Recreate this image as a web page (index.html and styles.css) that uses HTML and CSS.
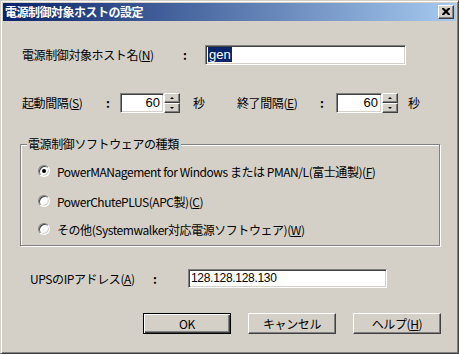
FILE: index.html
```html
<!DOCTYPE html>
<html lang="ja">
<head>
<meta charset="utf-8">
<title>電源制御対象ホストの設定</title>
<link rel="stylesheet" href="styles.css">
</head>
<body>
<div class="window">
  <div class="titlebar">
    <span class="title">電源制御対象ホストの設定</span>
    <span class="close"><svg width="8" height="7" viewBox="0 0 8 7"><path d="M0 0h2l2 2 2-2h2v1l-2.5 2.5L8 6v1H6L4 5 2 7H0V6l2.5-2.5L0 1z" fill="#000"/></svg></span>
  </div>
  <div class="body">
    <div class="row row1">
      <span class="lbl w-host">電源制御対象ホスト名(<u>N</u>)</span>
      <span class="colon c-host">:</span>
      <div class="edit e-host"><span class="sel">gen</span></div>
    </div>
    <div class="row row2">
      <span class="lbl w-start">起動間隔(<u>S</u>)</span>
      <span class="colon c-start">:</span>
      <div class="edit num e-start">60</div>
      <div class="spin"><span class="sb up"><i></i></span><span class="sb down"><i></i></span></div>
      <span class="unit u1">秒</span>
      <span class="lbl w-end">終了間隔(<u>E</u>)</span>
      <span class="colon c-end">:</span>
      <div class="edit num e-end">60</div>
      <div class="spin"><span class="sb up"><i></i></span><span class="sb down"><i></i></span></div>
      <span class="unit u2">秒</span>
    </div>
    <div class="group">
      <span class="caption">電源制御ソフトウェアの種類</span>
      <div class="radio r1"><span class="dot on"></span><span>PowerMANagement for Windows または PMAN/L(富士通製)(<u>F</u>)</span></div>
      <div class="radio r2"><span class="dot"></span><span>PowerChutePLUS(APC製)(<u>C</u>)</span></div>
      <div class="radio r3"><span class="dot"></span><span>その他(Systemwalker対応電源ソフトウェア)(<u>W</u>)</span></div>
    </div>
    <div class="row row3">
      <span class="lbl w-ups">UPSのIPアドレス(<u>A</u>)</span>
      <span class="colon c-ups">:</span>
      <div class="edit e-ups">128.128.128.130</div>
    </div>
    <div class="buttons">
      <div class="btn default"><span class="face">OK</span></div>
      <div class="btn"><span class="face">キャンセル</span></div>
      <div class="btn"><span class="face">ヘルプ(<u>H</u>)</span></div>
    </div>
  </div>
</div>
</body>
</html>
```
FILE: styles.css
```css
html, body {
  margin: 0;
  padding: 0;
  background: #d4d0c8;
}
body {
  font-family: "Noto Sans CJK JP", "Liberation Sans", sans-serif;
  font-size: 12px;
  color: #000;
  letter-spacing: -0.4px;
}
.window {
  width: 459px;
  height: 354px;
  box-sizing: border-box;
  background: #d4d0c8;
  border-style: solid;
  border-width: 1px;
  border-color: #d4d0c8 #404040 #404040 #d4d0c8;
  box-shadow: inset 1px 1px 0 #fff, inset -1px -1px 0 #808080;
  padding: 2px;
  display: flex;
  flex-direction: column;
}
.titlebar {
  height: 18px;
  flex: none;
  background: linear-gradient(to right, #0a246a, #a6caf0);
  display: flex;
  align-items: center;
  justify-content: space-between;
  padding: 0 2px 0 2px;
}
.title {
  color: #fff;
  font-weight: bold;
  font-size: 12px;
  line-height: 18px;
  letter-spacing: -0.5px;
}
.close {
  width: 16px;
  height: 14px;
  box-sizing: border-box;
  background: #d4d0c8;
  border-style: solid;
  border-width: 1px;
  border-color: #fff #404040 #404040 #fff;
  box-shadow: inset -1px -1px 0 #808080;
  display: flex;
  align-items: center;
  justify-content: center;
}
.close svg { display: block; margin-left: -1px; margin-top: -1px; }
.body {
  flex: 1;
  display: flex;
  flex-direction: column;
}
.row {
  display: flex;
  align-items: center;
  white-space: nowrap;
}
.row1 { margin-top: 24px; margin-left: 19px; height: 20px; }
.row2 { margin-top: 28px; margin-left: 19px; height: 20px; }
.row3 { margin-top: 23px; margin-left: 27px; height: 19px; }
.lbl, .colon, .unit { flex: none; line-height: 16px; }
.w-host { width: 161px; }
.c-host { width: 22px; }
.w-start { width: 84px; }
.c-start { width: 14px; }
.w-end { width: 83px; }
.c-end { width: 16px; }
.w-ups { width: 123px; }
.c-ups { width: 35px; }
.unit.u1 { margin-left: 13px; width: 44px; }
.unit.u2 { margin-left: 10px; }
.colon { font-weight: bold; }
.edit {
  flex: none;
  box-sizing: border-box;
  height: 20px;
  background: #fff;
  border-style: solid;
  border-width: 1px;
  border-color: #808080 #fff #fff #808080;
  box-shadow: inset 1px 1px 0 #404040, inset -1px -1px 0 #d4d0c8;
  padding: 0 3px 0 2px;
  line-height: 17px;
  font-family: "Liberation Sans", "Noto Sans CJK JP", sans-serif;
  font-size: 12px;
  letter-spacing: 0;
  overflow: hidden;
}
.e-host { width: 201px; }
.e-start { width: 44px; }
.e-end { width: 46px; }
.e-ups { width: 199px; height: 19px; line-height: 16px; letter-spacing: -0.3px; }
.num { text-align: right; font-size: 13px; }
.sel {
  background: #0a246a;
  color: #fff;
  padding: 0 1px;
  font-size: 13px;
}
.spin {
  flex: none;
  width: 16px;
  height: 20px;
  display: flex;
  flex-direction: column;
}
.sb {
  height: 10px;
  box-sizing: border-box;
  background: #d4d0c8;
  border-style: solid;
  border-width: 1px;
  border-color: #fff #404040 #404040 #fff;
  box-shadow: inset -1px -1px 0 #808080;
  display: flex;
  align-items: center;
  justify-content: center;
}
.sb i {
  width: 0;
  height: 0;
  border-left: 2px solid transparent;
  border-right: 2px solid transparent;
  margin-right: 1px;
}
.up i { border-bottom: 2px solid #000; }
.down i { border-top: 2px solid #000; }
.group {
  position: relative;
  margin: 31px 0 0 17px;
  width: 420px;
  height: 102px;
  box-sizing: border-box;
  border: 1px solid #808080;
  box-shadow: inset 1px 1px 0 #fff, 1px 1px 0 #fff;
  display: flex;
  flex-direction: column;
}
.caption {
  position: absolute;
  top: -9px;
  left: 6px;
  padding: 0 2px 0 1px;
  background: #d4d0c8;
  line-height: 16px;
}
.radio {
  display: flex;
  align-items: center;
  height: 16px;
  margin-left: 17px;
  white-space: nowrap;
  letter-spacing: -0.45px;
}
.r1 { margin-top: 18px; }
.r2 { margin-top: 14px; }
.r3 { margin-top: 12px; }
.dot {
  flex: none;
  width: 12px;
  height: 12px;
  box-sizing: border-box;
  border-radius: 50%;
  background: #fff;
  border: 1px solid;
  border-color: #808080 #fff #fff #808080;
  box-shadow: inset 1px 1px 0 #404040, inset -1px -1px 0 #d4d0c8;
  margin-right: 7px;
  position: relative;
}
.dot.on::after {
  content: "";
  position: absolute;
  left: 3px;
  top: 3px;
  width: 4px;
  height: 4px;
  border-radius: 50%;
  background: #000;
}
.buttons {
  display: flex;
  gap: 17px;
  margin: 25px 0 0 140px;
}
.btn {
  width: 88px;
  height: 21px;
  box-sizing: border-box;
  background: #d4d0c8;
  border-style: solid;
  border-width: 1px;
  border-color: #fff #404040 #404040 #fff;
  box-shadow: inset -1px -1px 0 #808080;
  display: flex;
  align-items: center;
  justify-content: center;
}
.btn.default {
  border: 1px solid #000;
  box-shadow: inset 1px 1px 0 #fff, inset -1px -1px 0 #404040, inset -2px -2px 0 #808080;
}
.face { line-height: 16px; }
```
